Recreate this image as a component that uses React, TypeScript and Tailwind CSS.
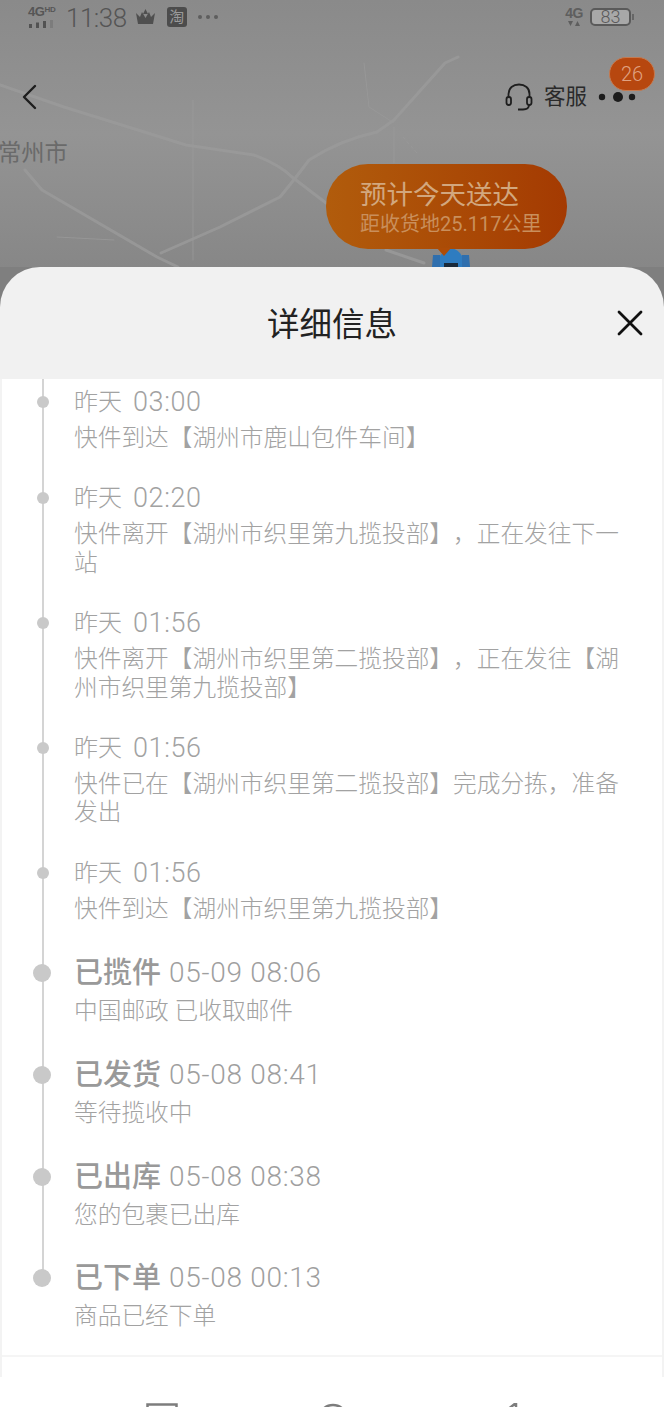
const font = "font-['Roboto','Noto_Sans_CJK_SC',sans-serif]";

type Step = {
  title: string;
  time?: string;
  lines: string;
  big?: boolean;
};

const steps: Step[] = [
  { title: "昨天", time: "03:00", lines: "快件到达【湖州市鹿山包件车间】" },
  { title: "昨天", time: "02:20", lines: "快件离开【湖州市织里第九揽投部】，正在发往下一站" },
  { title: "昨天", time: "01:56", lines: "快件离开【湖州市织里第二揽投部】，正在发往【湖州市织里第九揽投部】" },
  { title: "昨天", time: "01:56", lines: "快件已在【湖州市织里第二揽投部】完成分拣，准备发出" },
  { title: "昨天", time: "01:56", lines: "快件到达【湖州市织里第九揽投部】" },
  { title: "已揽件", time: "05-09 08:06", lines: "中国邮政 已收取邮件", big: true },
  { title: "已发货", time: "05-08 08:41", lines: "等待揽收中", big: true },
  { title: "已出库", time: "05-08 08:38", lines: "您的包裹已出库", big: true },
  { title: "已下单", time: "05-08 00:13", lines: "商品已经下单", big: true },
];

const MapRoads = () => (
  <svg className="absolute inset-0" width="664" height="267" viewBox="0 0 664 267" fill="none">
    <g stroke="#9b9b9b" strokeWidth="3" strokeLinecap="round" strokeLinejoin="round" opacity="0.8">
      <path d="M0 85 L64 107 L186 145 L254 155 Q280 165 292 177 L326 203" />
      <path d="M161 253 L220 227 L280 197 Q298 175 309 160 Q340 140 377 132 L394 120 L445 63 L458 57" />
      <path d="M25 170 L42 190 L157 257 L178 267" />
      <path d="M386 250 L424 263" />
    </g>
    <g stroke="#9a9a9a" strokeWidth="1" strokeLinecap="round" opacity="0.8">
      <path d="M364 63 L369 107 L394 123" />
      <path d="M394 127 L394 163" />
      <path d="M403 137 L417 153" strokeDasharray="3 3" />
      <path d="M57 237 L114 240" />
      <path d="M193 100 L193 260" />
    </g>
  </svg>
);

const Courier = () => (
  <svg className="absolute left-[431px] top-[247px]" width="40" height="20" viewBox="0 0 40 20">
    <path d="M2 8 L9 8 L9 20 L1 20 Z" fill="#2f6fae" />
    <path d="M31 8 L38 8 L39 20 L31 20 Z" fill="#2f6fae" />
    <path d="M9 9 Q14 2 20 1 Q27 2 31 9 L31 20 L9 20 Z" fill="#2e7cc0" />
    <path d="M13 16 H27 V20 H13 Z" fill="#1a2a3a" />
  </svg>
);

function StatusBar() {
  return (
    <div className="relative flex h-[34px] items-center pl-[28px] pr-[30px]">
      <div className="flex w-[30px] flex-col">
        <span className="font-['Liberation_Sans',sans-serif] text-[13px] leading-[12px] font-bold tracking-[-0.4px] text-[#565656]">
          4G<span className="align-top text-[8px] leading-[8px]">HD</span>
        </span>
        <svg width="26" height="8" viewBox="0 0 26 8" className="mt-[2px]">
          <rect x="1" y="4" width="3" height="4" fill="#525252" />
          <rect x="8" y="2.5" width="3" height="5.5" fill="#525252" />
          <rect x="15" y="1" width="3" height="7" fill="#525252" />
          <rect x="22" y="0" width="3" height="8" fill="#7c7c7c" />
        </svg>
      </div>
      <span className="ml-[8px] mt-[1px] font-['Roboto',sans-serif] text-[26px] leading-[34px] font-light tracking-[-0.5px] text-[#555555]">11:38</span>
      <svg className="ml-[8px]" width="21" height="16" viewBox="0 0 21 16">
        <path d="M1 4 L5 8 L7 3 L10.5 9 L14 3 L16 8 L20 4 L18 15 L3 15 Z M10.5 0 L13 5 L8 5 Z" fill="#4f4f4f" />
      </svg>
      <span className="ml-[11px] flex h-[20px] w-[20px] items-center justify-center rounded-[3px] bg-[#4c4c4c] text-[15px] leading-none text-[#9a9a9a]">
        淘
      </span>
      <svg className="ml-[10px]" width="22" height="6" viewBox="0 0 22 6">
        <circle cx="3" cy="3" r="2" fill="#5e5e5e" />
        <circle cx="11" cy="3" r="2" fill="#5e5e5e" />
        <circle cx="19" cy="3" r="2" fill="#5e5e5e" />
      </svg>
      <div className="ml-auto flex items-center">
        <div className="flex w-[18px] flex-col items-center">
          <span className="font-['Liberation_Sans',sans-serif] text-[14px] leading-[13px] font-bold tracking-[-0.5px] text-[#5e5e5e]">4G</span>
          <svg width="14" height="7" viewBox="0 0 14 7">
            <path d="M1 1 H6 L3.5 6 Z M8 6 H13 L10.5 1 Z" fill="#5e5e5e" />
          </svg>
        </div>
        <div className="ml-[7px] flex h-[18px] w-[41px] items-center justify-center rounded-[5px] border-2 border-[#5a5a5a] bg-[#a8a8a8] font-['Roboto',sans-serif] text-[18px] leading-none font-light text-[#5a5a5a]">
          83
        </div>
        <span className="ml-[1px] h-[6px] w-[2px] bg-[#666666]" />
      </div>
    </div>
  );
}

function TopBar() {
  return (
    <div className="relative mt-[44px] flex h-[38px] items-center pl-[21px]">
      <svg width="16" height="26" viewBox="0 0 16 26" fill="none">
        <path d="M14 2 L3 13 L14 24" stroke="#1d1d1d" strokeWidth="2.4" strokeLinecap="round" strokeLinejoin="round" />
      </svg>
      <svg className="ml-[468px]" width="28" height="28" viewBox="0 0 28 28" fill="none" stroke="#1e1e1e" strokeWidth="1.8">
        <path d="M3.5 15 V11 C3.5 5 8 1.5 14 1.5 C20 1.5 24.5 5 24.5 11 V15" />
        <rect x="1.5" y="14" width="4.5" height="8" rx="2.2" />
        <rect x="22" y="14" width="4.5" height="8" rx="2.2" />
        <path d="M24 22 C24 25 22 26.5 18 26.5 H13" />
      </svg>
      <span className="ml-[11px] text-[21.5px] leading-[28px] text-[#2a2a2a]">客服</span>
      <svg className="ml-[11px]" width="38" height="12" viewBox="0 0 38 12">
        <circle cx="4" cy="6" r="3.2" fill="#1c1c1c" />
        <circle cx="20" cy="6" r="5" fill="#1c1c1c" />
        <circle cx="34" cy="6" r="3.2" fill="#1c1c1c" />
      </svg>
    </div>
  );
}

function MapArea() {
  return (
    <div className="relative h-[267px] shrink-0 bg-gradient-to-b from-[#8a8a8a] via-[#949494] to-[#878787]">
      <MapRoads />
      <StatusBar />
      <TopBar />
      <span className="absolute left-[-2px] top-[139px] text-[23.3px] leading-[28px] text-[#6a6a6a]">常州市</span>
      <div className="absolute left-[609px] top-[57px] flex h-[34px] w-[46px] items-center justify-center rounded-[17px] border border-[#c57a50] bg-[#b7470f] font-['Roboto',sans-serif] text-[20px] leading-none font-light text-[#e0a282]">
        26
      </div>
      <Courier />
      <div className="absolute left-[326px] top-[164px] flex h-[85px] w-[241px] flex-col rounded-[42px] bg-gradient-to-r from-[#b15c0c] to-[#a43a02] pl-[34px]">
        <span className="mt-[15px] text-[26.5px] leading-[32px] text-[#d2a77e]">预计今天送达</span>
        <span className="text-[20px] leading-[26px] text-[#c98f5c]">距收货地25.117公里</span>
      </div>
      <div className="absolute left-[437px] top-[248px] h-0 w-0 border-x-[7px] border-t-[8px] border-x-transparent border-t-[#ae4c07]" />
    </div>
  );
}

function SheetHeader() {
  return (
    <div className="shrink-0 bg-[#7f7f7f]">
      <div className="flex h-[112px] items-center rounded-t-[40px] bg-[#f1f1f1]">
        <span className="ml-[267px] mt-[4px] text-[32.5px] leading-[40px] text-[#222222]">详细信息</span>
        <svg className="ml-[220px]" width="26" height="26" viewBox="0 0 26 26" fill="none">
          <path d="M2 2 L24 24 M24 2 L2 24" stroke="#111111" strokeWidth="2.8" strokeLinecap="round" />
        </svg>
      </div>
    </div>
  );
}

function StepRow({ step }: { step: Step }) {
  return (
    <li className={step.big ? "relative pb-[27.7px]" : "relative pb-[28px]"}>
      {step.big ? (
        <span className="absolute left-[-41px] top-[13px] h-[18px] w-[18px] rounded-full bg-[#c9c9c9]" />
      ) : (
        <span className="absolute left-[-37.5px] top-[12px] h-[12px] w-[12px] rounded-full bg-[#c9c9c9]" />
      )}
      {step.big ? (
        <div className="flex h-[44px] items-center">
          <span className="text-[29px] leading-[44px] font-medium text-[#999999]">{step.title}</span>
          <span className="ml-[8px] text-[28px] leading-[44px] font-light tracking-[0.7px] text-[#9f9f9f]">{step.time}</span>
        </div>
      ) : (
        <div className="flex h-[36px] items-center font-light text-[#a2a2a2]">
          <span className="text-[24px] leading-[36px]">{step.title}</span>
          <span className="ml-[11px] text-[27px] leading-[36px] tracking-[0.6px]">{step.time}</span>
        </div>
      )}
      <p className={step.big ? "mt-[2px] w-[552px] text-[23.7px] leading-[28px] font-light text-[#a2a2a2]" : "mt-[4px] w-[552px] text-[23.7px] leading-[28.4px] font-light text-[#a2a2a2] [text-spacing-trim:space-all]"}>
        {step.lines}
      </p>
    </li>
  );
}

export default function App() {
  return (
    <div className={`flex h-[1407px] w-[664px] flex-col overflow-hidden bg-white ${font}`} lang="zh-CN">
      <MapArea />
      <SheetHeader />
      <div className="flex h-[998px] shrink-0 flex-col border-x-2 border-[#f3f3f3]">
        <div className="relative h-[976px] overflow-hidden pl-[72px] pt-[5px]">
          <span className="absolute left-[40px] top-0 bottom-[78px] w-[1.5px] bg-[#d4d4d4]" />
          <ul>
            {steps.map((step, i) => (
              <StepRow key={i} step={step} />
            ))}
          </ul>
        </div>
        <div className="h-[22px] border-t-2 border-[#f5f5f5]" />
      </div>
      <div className="flex pl-[146px] pt-[26px]">
        <svg width="32" height="20" viewBox="0 0 32 20" fill="none" stroke="#7d7d7d" strokeWidth="2.5">
          <rect x="1.5" y="1.5" width="29" height="24" />
        </svg>
        <svg className="ml-[139px]" width="32" height="20" viewBox="0 0 32 20" fill="none" stroke="#7d7d7d" strokeWidth="2.5">
          <circle cx="16" cy="16" r="14" />
        </svg>
        <svg className="ml-[145px]" width="32" height="20" viewBox="0 0 32 20" fill="none" stroke="#7d7d7d" strokeWidth="2.5">
          <path d="M22 0 L4 14 L22 28 Z" />
        </svg>
      </div>
    </div>
  );
}
